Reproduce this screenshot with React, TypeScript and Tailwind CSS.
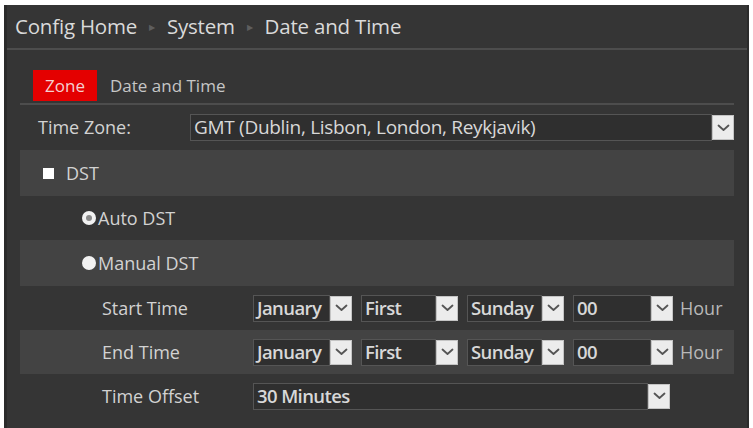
import type { ReactNode } from "react";

const font = { fontFamily: '"Open Sans", "Liberation Sans", sans-serif' };

function Chevron() {
  return (
    <svg width="13" height="8" viewBox="0 0 13 8" fill="none">
      <path d="M1.5 1.5 L6.5 6 L11.5 1.5" stroke="#555" strokeWidth="1.8" strokeLinecap="round" strokeLinejoin="round" />
    </svg>
  );
}

function ArrowBox() {
  return (
    <div className="w-[22px] h-[25px] bg-[#ececec] border border-[#c4c4c4] flex items-center justify-center shrink-0">
      <Chevron />
    </div>
  );
}

function Select({ value, className, bold = true }: { value: string; className: string; bold?: boolean }) {
  return (
    <div className={`flex items-center h-[27px] ${className}`}>
      <div
        className={`flex-1 h-full border border-[#555] bg-[#2f2f2f] flex items-center pl-[3px] text-[#d8d8d8] whitespace-nowrap overflow-visible ${
          bold ? "text-[18.5px] font-semibold tracking-[-0.6px]" : "text-[19px] tracking-[-0.3px]"
        }`}
      >
        {value}
      </div>
      <ArrowBox />
    </div>
  );
}

function Row({ shade, children }: { shade: "light" | "dark"; children: ReactNode }) {
  return (
    <div className={`flex items-center ${shade === "light" ? "bg-[#434343]" : "bg-[#353535]"} text-[18px] text-[#d2d2d2]`}>
      {children}
    </div>
  );
}

function TimeRow({ label, shade }: { label: string; shade: "light" | "dark" }) {
  return (
    <Row shade={shade}>
      <div className="h-[44px] flex items-center w-full">
        <span className="w-[233px] shrink-0 pl-[82px] whitespace-nowrap">{label}</span>
        <div className="flex items-center gap-[9px]">
          <Select value="January" className="w-[99px]" />
          <Select value="First" className="w-[97px]" />
          <Select value="Sunday" className="w-[97px]" />
          <Select value="00" className="w-[100px]" />
          <span className="text-[#b8b8b8] -ml-[2px]">Hour</span>
        </div>
      </div>
    </Row>
  );
}

export default function App() {
  return (
    <div className="w-[753px] h-[428px] bg-white pt-[5px] pl-[4px] pr-[4px] overflow-hidden" style={font}>
      <div className="h-full bg-[#353535] border-l-[3px] border-r-[2px] border-[#2b2b2b] flex flex-col">
        {/* breadcrumb */}
        <div className="h-[45px] flex items-center pl-[8px] text-[20.5px] text-[#dadada] tracking-[-0.2px] border-b-2 border-[#4d4d4d] shrink-0">
          <span>Config Home</span>
          <span className="text-[8px] text-[#5e5e5e] mx-[12px]">▶</span>
          <span>System</span>
          <span className="text-[8px] text-[#5e5e5e] mx-[12px]">▶</span>
          <span>Date and Time</span>
        </div>

        <div className="flex flex-col px-[13px]">
          {/* tabs */}
          <div className="h-[55px] flex items-end pb-[2px] border-b-2 border-[#4d4d4d] text-[17px]">
            <div className="w-[64px] h-[31px] bg-[#e40000] text-[#f4d0d0] flex items-center justify-center ml-[13px]">
              Zone
            </div>
            <div className="h-[31px] flex items-center ml-[13px] text-[#c6c6c6]">Date and Time</div>
          </div>

          <Row shade="dark">
            <div className="h-[45px] flex items-center w-full">
              <span className="w-[170px] shrink-0 pl-[18px]">Time Zone:</span>
              <Select value="GMT (Dublin, Lisbon, London, Reykjavik)" className="w-[545px]" bold={false} />
            </div>
          </Row>

          <Row shade="light">
            <div className="h-[46px] flex items-center pl-[23px] gap-[12px]">
              <div className="w-[11px] h-[11px] bg-white" />
              <span>DST</span>
            </div>
          </Row>

          <Row shade="dark">
            <div className="h-[44px] flex items-center pl-[62px] gap-[2px]">
              <div className="w-[14px] h-[14px] rounded-full bg-[#f2f2f2] flex items-center justify-center">
                <div className="w-[6px] h-[6px] rounded-full bg-[#8a8a8a]" />
              </div>
              <span>Auto DST</span>
            </div>
          </Row>

          <Row shade="light">
            <div className="h-[46px] flex items-center pl-[62px] gap-[2px]">
              <div className="w-[14px] h-[14px] rounded-full bg-[#f2f2f2]" />
              <span>Manual DST</span>
            </div>
          </Row>

          <TimeRow label="Start Time" shade="dark" />
          <TimeRow label="End Time" shade="light" />

          <Row shade="dark">
            <div className="h-[44px] flex items-center w-full">
              <span className="w-[233px] shrink-0 pl-[82px] whitespace-nowrap">Time Offset</span>
              <Select value="30 Minutes" className="w-[417px]" />
            </div>
          </Row>
        </div>
      </div>
    </div>
  );
}
